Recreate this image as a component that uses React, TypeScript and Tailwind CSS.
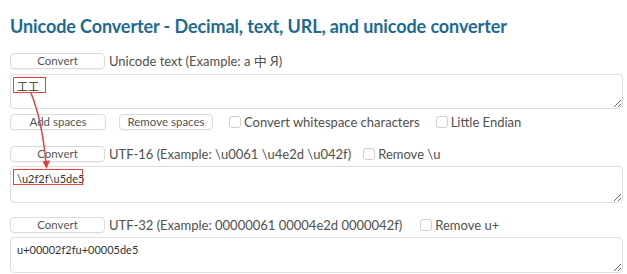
import React from "react";

const btn =
  "h-[16px] rounded-[4px] border border-[#dcdcdc] bg-white text-[11.5px] leading-none text-[#555] shadow-[0_1px_1px_rgba(0,0,0,0.04)]";
const label = "text-[13px] leading-none text-[#505050]";
const box =
  "block w-full resize-y rounded-[4px] border border-[#dedede] bg-white px-[6px] py-[5px] text-[11px] leading-tight text-[#333] outline-none";

function Check({ text }: { text: string }) {
  return (
    <label className={`flex items-center gap-[3px] ${label}`}>
      <span className="inline-block h-[12px] w-[12px] rounded-[3px] border border-[#cfcfcf] bg-white" />
      {text}
    </label>
  );
}

export default function App() {
  return (
    <div
      className="relative h-[274px] w-[627px] overflow-hidden bg-white px-[10px] pt-[17px]"
      style={{ fontFamily: "Lato, 'Noto Sans CJK SC', sans-serif" }}
    >
      <h1 className="text-[18px] font-bold leading-none tracking-[-0.1px] text-[#1d6a93]">
        Unicode Converter - Decimal, text, URL, and unicode converter
      </h1>

      <div className="mt-[18px] flex items-center gap-[4px]">
        <button className={`${btn} w-[95px]`}>Convert</button>
        <span className={label}>Unicode text (Example: a 中 Я)</span>
      </div>
      <div className="relative mt-[5px] w-[613px]">
        <textarea className={`${box} h-[35px]`} readOnly value="⼯工" />
        <div className="pointer-events-none absolute left-[3px] top-[3px] h-[16px] w-[33px] border-[1.5px] border-[#d9473c]" />
      </div>

      <div className="mt-[5px] flex items-center">
        <button className={`${btn} w-[96px]`}>Add spaces</button>
        <button className={`${btn} ml-[13px] w-[94px]`}>Remove spaces</button>
        <div className="ml-[16px]">
          <Check text="Convert whitespace characters" />
        </div>
        <div className="ml-[16px]">
          <Check text="Little Endian" />
        </div>
      </div>

      <div className="mt-[16px] flex items-center">
        <button className={`${btn} w-[95px]`}>Convert</button>
        <span className={`${label} ml-[4px]`}>
          UTF-16 (Example: \u0061 \u4e2d \u042f)
        </span>
        <div className="ml-[12px]">
          <Check text="Remove \u" />
        </div>
      </div>
      <div className="relative mt-[4px] w-[613px]">
        <textarea className={`${box} h-[37px]`} readOnly value="\u2f2f\u5de5" />
        <div className="pointer-events-none absolute left-[3px] top-[3px] h-[16px] w-[70px] border-[1.5px] border-[#d9473c]" />
      </div>

      <div className="mt-[14px] flex items-center">
        <button className={`${btn} w-[95px]`}>Convert</button>
        <span className={`${label} ml-[4px]`}>
          UTF-32 (Example: 00000061 00004e2d 0000042f)
        </span>
        <div className="ml-[18px]">
          <Check text="Remove u+" />
        </div>
      </div>
      <div className="mt-[4px] w-[613px]">
        <textarea className={`${box} h-[36px]`} readOnly value="u+00002f2fu+00005de5" />
      </div>

      <svg
        className="pointer-events-none absolute left-0 top-0"
        width="627"
        height="274"
        viewBox="0 0 627 274"
      >
        <path d="M31 93 Q 42 120 46 163" fill="none" stroke="#d9473c" strokeWidth="1.5" />
        <path d="M42.5 161 L46.5 169 L50 160.5 Z" fill="#d9473c" />
      </svg>
    </div>
  );
}
